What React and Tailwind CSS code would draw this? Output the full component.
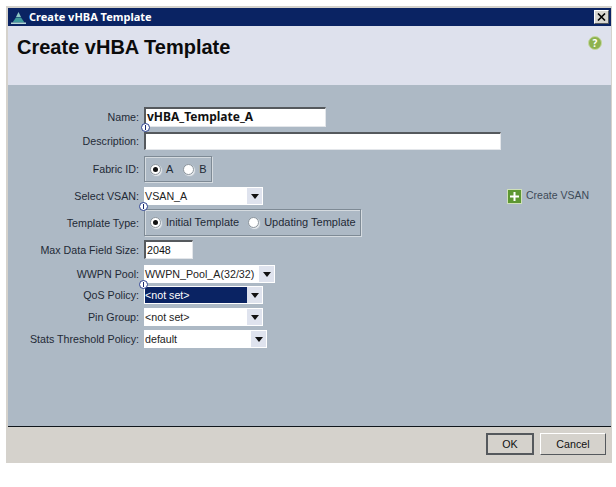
import React from 'react';

const noto = "font-['Noto_Sans',sans-serif]";

const Arrow = () => (
  <svg width="8" height="5" viewBox="0 0 8 5"><path d="M0 0h8L4 5z" fill="#111" /></svg>
);

// little "i" marker that sits on the corner between two rows
const InfoMark = () => (
  <span className="absolute left-[-5px] bottom-[-6px] z-10 w-[9px] h-[9px] rounded-full bg-white border border-[#2a3f8f] flex items-center justify-center">
    <span className="block w-px h-[5px] bg-[#1b2a70]" />
  </span>
);

const Row = ({ label, children, className = '' }) => (
  <div className={`flex items-center ${className}`}>
    <label className="w-[133px] pt-px pr-[5px] text-right text-[10.7px] text-[#1f2a36] whitespace-nowrap">{label}</label>
    {children}
  </div>
);

const Field = ({ width, height = 'h-[19px]', bold, value, info }) => (
  <div className={`relative ${width} ${height} bg-white border-t-2 border-l-2 border-t-[#55595d] border-l-[#55595d] border-r border-b border-r-[#e3e6ea] border-b-[#e3e6ea] flex items-center pl-px text-[#111] ${bold ? `font-bold text-[12px] pb-[2px] ${noto}` : 'text-[10.7px]'}`}>
    {value}
    {info && <InfoMark />}
  </div>
);

const Select = ({ width, value, selected, info }) => (
  <div className={`relative ${width} h-[18px] bg-white flex items-center p-px text-[10.7px] text-[#222]`}>
    <div className={`flex-1 h-full flex items-center pt-px ${selected ? 'bg-[#0a2363] text-white' : ''}`}>{value}</div>
    <div className="w-[15px] h-full bg-[#dfe3ee] flex items-center justify-center"><Arrow /></div>
    {info && <InfoMark />}
  </div>
);

const Radio = ({ checked, label, className = '' }) => (
  <span className={`flex items-center gap-[5px] text-[11px] text-[#1f2a36] whitespace-nowrap ${className}`}>
    <span className="w-[11px] h-[11px] rounded-full bg-white border border-[#8b949c] flex items-center justify-center shadow-[1px_1px_1px_#e8ebee]">
      {checked && <span className="w-[5px] h-[5px] rounded-full bg-[#111]" />}
    </span>
    {label}
  </span>
);

const Group = ({ width, height, children }) => (
  <div className={`${width} ${height} border border-[#7e8a95] shadow-[inset_1px_1px_0_#d5dbe0,1px_1px_0_#d5dbe0] flex items-center pl-[5px]`}>{children}</div>
);

export default function App() {
  return (
    <div className="w-[616px] h-[487px] bg-white pt-[6px] pl-[6px] font-['Liberation_Sans',sans-serif]">
      <div className="w-[606px] h-[457px] bg-[#d5d2cc] pt-[2px] pl-[2px] pr-px flex flex-col">
        <div className={`h-[18px] bg-[#0a2363] flex items-center pl-[3px] pr-[2px] text-white text-[11px] font-bold ${noto}`}>
          <svg width="15" height="13" viewBox="0 0 15 13" className="mr-[3px]">
            <path d="M7.5 1 10 6H5z" fill="#8fc7c4" />
            <path d="M5 6.5h5l3.5 5h-12z" fill="#3f9a9c" />
            <path d="M0 11.5h15V13H0z" fill="#b8d8d8" />
          </svg>
          <span>Create vHBA Template</span>
          <button className="ml-auto w-[15px] h-[14px] bg-[#d8d6d0] border border-t-white border-l-white border-r-[#55595d] border-b-[#55595d] flex items-center justify-center">
            <svg width="9" height="8" viewBox="0 0 9 8"><path d="M1 0.5 8 7.5M8 0.5 1 7.5" stroke="#000" strokeWidth="1.6" /></svg>
          </button>
        </div>

        <div className="h-[59px] bg-[#dee1ed] flex justify-between pl-[9px] pr-[9px] pt-[8px]">
          <h1 className="text-[20px] leading-[26px] font-bold text-[#0b0b0b]">Create vHBA Template</h1>
          <span className={`w-[14px] h-[14px] mt-[2px] rounded-full bg-[#8db24e] border border-[#c5d8a0] flex items-center justify-center text-white text-[10px] font-bold leading-none ${noto}`}>?</span>
        </div>

        <div className="h-[342px] bg-[#adb9c5] border-b border-b-[#10161c] pl-[3px] pr-[22px] pt-[22px] flex flex-col">
          <Row className="mb-[5px]" label="Name:">
            <Field width="w-[182px]" height="h-[20px]" bold value="vHBA_Template_A" info />
          </Row>
          <Row className="mb-[6px]" label="Description:">
            <Field width="w-[357px]" height="h-[18px]" />
          </Row>
          <Row className="mb-[5px]" label="Fabric ID:">
            <Group width="w-[68px]" height="h-[26px]">
              <Radio checked label="A" />
              <Radio label="B" className="ml-[10px]" />
            </Group>
          </Row>
          <Row className="mb-[4px]" label="Select VSAN:">
            <Select width="w-[119px]" value="VSAN_A" info />
            <span className="ml-auto flex items-center gap-[4px] text-[10.5px] text-[#3d4a57]">
              <span className="w-[15px] h-[15px] bg-[#5d9732] border border-[#cfe0b8] flex items-center justify-center">
                <svg width="9" height="9" viewBox="0 0 9 9"><path d="M3.5 0h2v3.5H9v2H5.5V9h-2V5.5H0v-2h3.5z" fill="#fff" /></svg>
              </span>
              Create VSAN
            </span>
          </Row>
          <Row className="mb-[4px]" label="Template Type:">
            <Group width="w-[217px]" height="h-[27px]">
              <Radio checked label="Initial Template" />
              <Radio label="Updating Template" className="ml-[9px]" />
            </Group>
          </Row>
          <Row className="mb-[6px]" label="Max Data Field Size:">
            <Field width="w-[49px]" value="2048" />
          </Row>
          <Row className="mb-[3px]" label="WWPN Pool:">
            <Select width="w-[131px]" value="WWPN_Pool_A(32/32)" info />
          </Row>
          <Row className="mb-[4px]" label="QoS Policy:">
            <Select width="w-[119px]" value="<not set>" selected />
          </Row>
          <Row className="mb-[4px]" label="Pin Group:">
            <Select width="w-[119px]" value="<not set>" />
          </Row>
          <Row label="Stats Threshold Policy:">
            <Select width="w-[123px]" value="default" />
          </Row>
        </div>

        <div className="flex-1 flex justify-end items-start pt-[6px] pr-[5px] gap-[6px]">
          <button className="w-[48px] h-[22px] bg-[#d5d2cc] border-2 border-[#55595d] text-[10.7px] text-[#111]">OK</button>
          <button className="w-[66px] h-[22px] bg-[#d5d2cc] border border-t-white border-l-white border-r-[#55595d] border-b-[#55595d] text-[10.7px] text-[#111]">Cancel</button>
        </div>
      </div>
    </div>
  );
}
